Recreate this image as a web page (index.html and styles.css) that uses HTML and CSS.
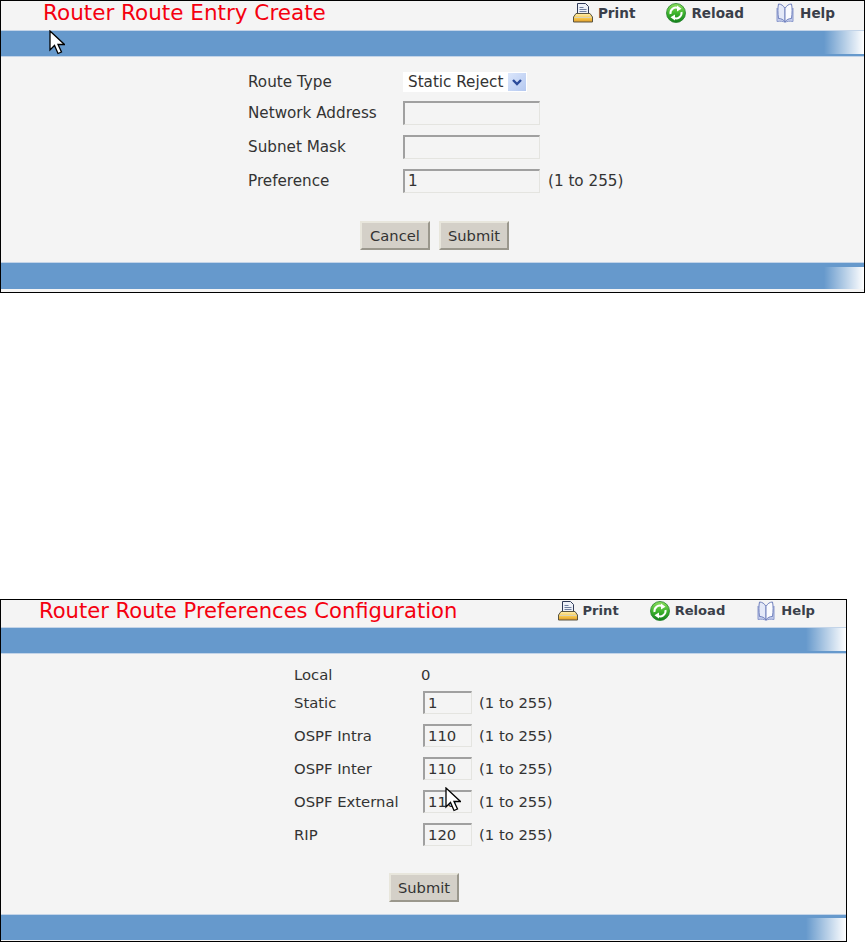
FILE: index.html
```html
<!DOCTYPE html>
<html lang="en">
<head>
<meta charset="utf-8">
<title>Router Route</title>
<link rel="stylesheet" href="styles.css">
</head>
<body>
<section class="panel panel-a">
  <header class="head">
    <h1 class="title">Router Route Entry Create</h1>
    <nav class="tools">
      <a class="tool"><svg class="ico" viewBox="0 0 20 20"><use href="#i-print"/></svg>Print</a>
      <a class="tool"><svg class="ico" viewBox="0 0 20 20"><use href="#i-reload"/></svg>Reload</a>
      <a class="tool"><svg class="ico" viewBox="0 0 20 20"><use href="#i-help"/></svg>Help</a>
    </nav>
  </header>
  <div class="bar bar-top"></div>
  <form class="form">
    <div class="row row-first"><span class="label">Route Type</span>
      <span class="select"><span>Static Reject</span><span class="arrow"><svg viewBox="0 0 18 18" width="18" height="18"><path d="M5 7l4 4 4-4" fill="none" stroke="#2a4a9a" stroke-width="2.4"/></svg></span></span></div>
    <div class="row"><span class="label">Network Address</span><span class="input"></span></div>
    <div class="row"><span class="label">Subnet Mask</span><span class="input"></span></div>
    <div class="row"><span class="label">Preference</span><span class="input">1</span><span class="hint">(1 to 255)</span></div>
    <div class="actions"><button type="button" class="btn">Cancel</button><button type="button" class="btn">Submit</button></div>
  </form>
  <div class="bar bar-bottom"></div>
  <svg class="cursor cursor-a" viewBox="0 0 16 26" width="16" height="26"><use href="#i-cursor"/></svg>
</section>

<section class="panel panel-b">
  <header class="head">
    <h1 class="title">Router Route Preferences Configuration</h1>
    <nav class="tools">
      <a class="tool"><svg class="ico" viewBox="0 0 20 20"><use href="#i-print"/></svg>Print</a>
      <a class="tool"><svg class="ico" viewBox="0 0 20 20"><use href="#i-reload"/></svg>Reload</a>
      <a class="tool"><svg class="ico" viewBox="0 0 20 20"><use href="#i-help"/></svg>Help</a>
    </nav>
  </header>
  <div class="bar bar-top"></div>
  <form class="form">
    <div class="row row-local"><span class="label">Local</span><span class="value">0</span></div>
    <div class="row"><span class="label">Static</span><span class="input">1</span><span class="hint">(1 to 255)</span></div>
    <div class="row"><span class="label">OSPF Intra</span><span class="input">110</span><span class="hint">(1 to 255)</span></div>
    <div class="row"><span class="label">OSPF Inter</span><span class="input">110</span><span class="hint">(1 to 255)</span></div>
    <div class="row"><span class="label">OSPF External</span><span class="input">110</span><span class="hint">(1 to 255)</span></div>
    <div class="row"><span class="label">RIP</span><span class="input">120</span><span class="hint">(1 to 255)</span></div>
    <div class="actions"><button type="button" class="btn">Submit</button></div>
  </form>
  <div class="bar bar-bottom"></div>
  <svg class="cursor cursor-b" viewBox="0 0 16 26" width="16" height="26"><use href="#i-cursor"/></svg>
</section>

<svg class="defs" width="0" height="0" aria-hidden="true">
  <defs>
    <linearGradient id="g-green" x1="0" y1="0" x2="0" y2="1"><stop offset="0" stop-color="#8fe060"/><stop offset="0.5" stop-color="#3fb52e"/><stop offset="1" stop-color="#12801c"/></linearGradient>
    <linearGradient id="g-yellow" x1="0" y1="0" x2="0" y2="1"><stop offset="0" stop-color="#fff0b0"/><stop offset="0.6" stop-color="#f6c548"/><stop offset="1" stop-color="#e09a28"/></linearGradient>
    <symbol id="i-print" viewBox="0 0 20 20">
      <path d="M4.500 .5h8l3 3v8.500h-11z" fill="#eef1f8" stroke="#2f3a58"/>
      <path d="M6.500 4.500h4M6.500 6.500h7M6.500 8.500h7" stroke="#6f7f9f"/>
      <path d="M3 10.500h14l2.500 3.500v5h-19v-5z" fill="url(#g-yellow)" stroke="#5a5440"/>
      <path d="M1.500 14.500h17" stroke="#d8d2b8"/>
    </symbol>
    <symbol id="i-reload" viewBox="0 0 20 20">
      <circle cx="10" cy="10" r="9.500" fill="url(#g-green)" stroke="#22802a" stroke-width=".8"/>
      <path d="M4.500 11A5.500 5.500 0 0 1 12.500 5.300" fill="none" stroke="#fff" stroke-width="2"/>
      <path d="M15.500 9A5.500 5.500 0 0 1 7.500 14.700" fill="none" stroke="#fff" stroke-width="2"/>
      <path d="M11 2.500l4.500 3.300-4.500 2.700zM9 17.500l-4.500-3.300 4.500-2.700z" fill="#fff"/>
    </symbol>
    <symbol id="i-help" viewBox="0 0 20 20">
      <path d="M2 5v13.500c3-.6 6-.3 8 .8 2-1.100 5-1.400 8-.8V5" fill="#c6cfee" stroke="#8a98cc"/>
      <path d="M10 5.500C8.500 2.500 6 1 3.500 1c-.8 3.500-.8 9 0 14.500 2.500 0 5 1 6.500 3.500z" fill="#e4e9f8" stroke="#7080bc"/>
      <path d="M10 5.500c1.500-3 4-4.500 6.500-4.500.8 3.500.8 9 0 14.500-2.500 0-5 1-6.500 3.500z" fill="#fafbff" stroke="#7080bc"/>
    </symbol>
    <symbol id="i-cursor" viewBox="0 0 16 26">
      <path d="M1 1v19l4.500-4.500 3.500 8 3.500-1.500-3.500-7.500h6.500z" fill="#fff" stroke="#000" stroke-width="1.300" stroke-linejoin="miter"/>
    </symbol>
  </defs>
</svg>
</body>
</html>
```
FILE: styles.css
```css
* { box-sizing: border-box; }
html, body { margin: 0; padding: 0; background: #fff; }
body { font-family: "DejaVu Sans", Verdana, sans-serif; color: #333; }

.panel { position: relative; display: flex; flex-direction: column; background: #f4f4f4; border: 1px solid #000; }
.panel-a { width: 865px; height: 293px; }
.panel-b { width: 847px; height: 343px; margin-top: 306px; }

.head { display: flex; align-items: center; height: 29px; padding-bottom: 6px; }
.panel-a .head { padding-left: 42px; }
.panel-b .head { padding-left: 38px; height: 27px; }
.title { margin: 0; font-weight: 400; color: #f5000f; white-space: nowrap; }
.panel-a .title { font-size: 21.500px; }
.panel-b .title { font-size: 21.100px; }

.tools { display: flex; margin-left: auto; }
.tool { display: flex; align-items: center; gap: 5px; font-weight: 700; color: #3a3f4a; }
.ico { width: 20px; height: 20px; }
.panel-a .tool { font-size: 13.600px; }
.panel-b .tool { font-size: 13.100px; }
.panel-a .tools { gap: 31px; padding-right: 29px; }
.panel-b .tools { gap: 31px; padding-right: 31px; }

.bar { flex: none; background-color: #6699cc; }
.bar-top { height: 27px; border-top: 1px solid #c3d4e8; border-bottom: 1px solid #c3d4e8;
  background-image: linear-gradient(90deg, rgba(255,255,255,0), #fff);
  background-repeat: no-repeat; background-position: right 0 top 0; background-size: 40px 23px; }
.bar-bottom { border-top: 1px solid #c3d4e8;
  background-image: linear-gradient(90deg, rgba(255,255,255,0), #fff);
  background-repeat: no-repeat; background-position: right 0 bottom 0; background-size: 40px 22px; }
.panel-a .bar-bottom { height: 30px; border-bottom: 3px solid #f4f4f4; }
.panel-b .bar-bottom { height: 27px; border-bottom: 1px solid #f4f4f4; }

.form { flex: 1; display: flex; flex-direction: column; }
.row { display: flex; align-items: center; height: 34px; }
.panel-a .form { padding: 11px 0 0 247px; font-size: 15.200px; }
.panel-a .row-first { height: 28px; }
.panel-a .label { width: 155px; }
.panel-a .input { width: 137px; height: 24px; }
.panel-a .hint { margin-left: 8px; }
.panel-b .form { padding: 9px 0 0 293px; font-size: 14.800px; }
.panel-b .row { height: 33px; }
.panel-b .row-local { height: 23px; }
.panel-b .label { width: 129px; }
.panel-b .input { width: 49px; height: 23px; }
.panel-b .hint { margin-left: 7px; }
.value { margin-left: -2px; }

.input { display: flex; align-items: center; padding: 0 0 1px 3px;
  background: #f4f4f4; border: 2px solid #a0a0a0; border-right: 1px solid #e4e4e0; border-bottom: 1px solid #e4e4e0; }

.select { display: flex; align-items: center; justify-content: space-between; width: 124px; height: 20px; padding: 0 1px 0 5px; background: #fff; }
.arrow { display: flex; width: 18px; height: 18px; background: linear-gradient(135deg, #dbe6fb, #b4c8f0); }

.actions { display: flex; justify-content: center; gap: 9px; }
.panel-a .actions { margin: 23px 0 0 -247px; padding-left: 4px; }
.panel-b .actions { margin: 22px 0 0 -293px; padding-left: 1px; }
.btn { font: inherit; font-size: 14.700px; color: #333; padding: 0; width: 70px; height: 29px; background: #d4d0c8; border: 2px solid; border-color: #e8e6dc #9a978c #9a978c #e8e6dc; }

.cursor { position: absolute; }
.cursor-a { left: 48px; top: 29px; }
.cursor-b { left: 444px; top: 187px; }
.defs { position: absolute; }
```
